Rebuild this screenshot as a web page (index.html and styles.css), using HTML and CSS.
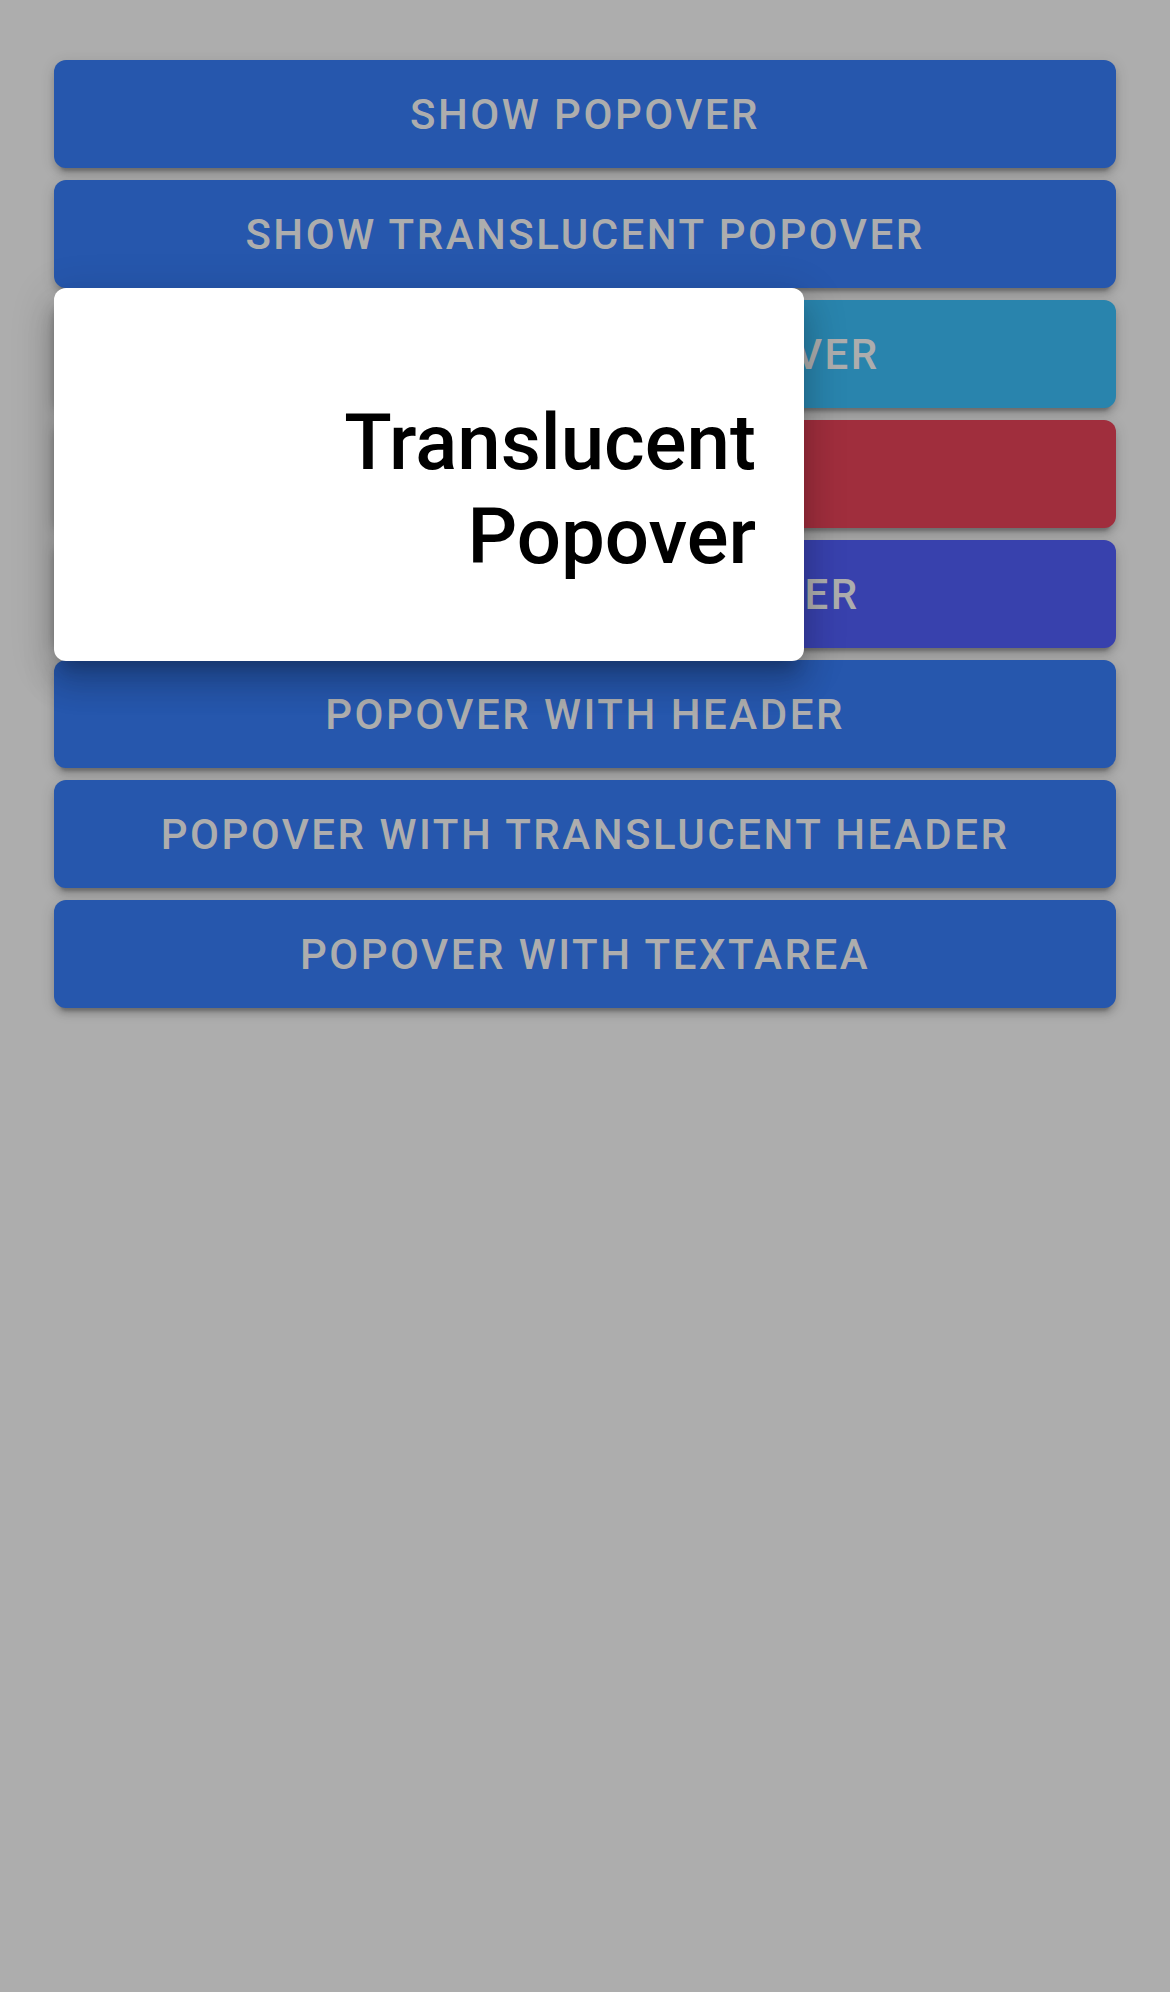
FILE: index.html
```html
<!DOCTYPE html>
<html lang="en">
<head>
<meta charset="utf-8">
<title>Popover</title>
<link rel="stylesheet" href="styles.css">
</head>
<body>
<div class="content">
  <button class="btn btn-primary">Show Popover</button>
  <button class="btn btn-primary">Show Translucent Popover</button>
  <button class="btn btn-secondary">Show Long List Popover</button>
  <button class="btn btn-danger">No Backdrop</button>
  <button class="btn btn-tertiary">Show Custom Popover</button>
  <button class="btn btn-primary">Popover With Header</button>
  <button class="btn btn-primary">Popover With Translucent Header</button>
  <button class="btn btn-primary">Popover With Textarea</button>
</div>
<div class="popover">
  <h1 class="popover-title">Translucent Popover</h1>
</div>
</body>
</html>
```
FILE: styles.css
```css
html, body {
  margin: 0;
  padding: 0;
}
body {
  background: #adadad;
  width: 1170px;
  height: 1992px;
  position: relative;
  font-family: Roboto, "Liberation Sans", sans-serif;
}
.content {
  padding: 48px 48px;
}
.btn {
  display: flex;
  align-items: center;
  justify-content: center;
  width: calc(100% - 12px);
  height: 108px;
  margin: 12px 6px;
  border: none;
  border-radius: 12px;
  font-family: Roboto, "Liberation Sans", sans-serif;
  font-weight: 500;
  font-size: 42px;
  letter-spacing: 2.52px;
  text-transform: uppercase;
  color: #adadad;
  box-shadow: 0 9px 3px -6px rgba(0,0,0,0.2), 0 6px 6px 0 rgba(0,0,0,0.14), 0 3px 15px 0 rgba(0,0,0,0.12);
  padding: 0;
}
.btn-primary { background: #2657ad; }
.btn-secondary { background: #2984ad; }
.btn-danger { background: #a02e3d; }
.btn-tertiary { background: #3841ad; }

.popover {
  position: absolute;
  top: 288px;
  left: 54px;
  width: 750px;
  box-sizing: border-box;
  background: #ffffff;
  border-radius: 12px;
  padding: 48px;
  box-shadow: 0 15px 15px -9px rgba(0,0,0,0.2), 0 24px 30px 3px rgba(0,0,0,0.14), 0 9px 42px 6px rgba(0,0,0,0.12);
}
.popover-title {
  margin: 60px 0 30px;
  font-size: 78px;
  font-weight: 500;
  line-height: 1.2;
  text-align: right;
  color: #000000;
}
```
